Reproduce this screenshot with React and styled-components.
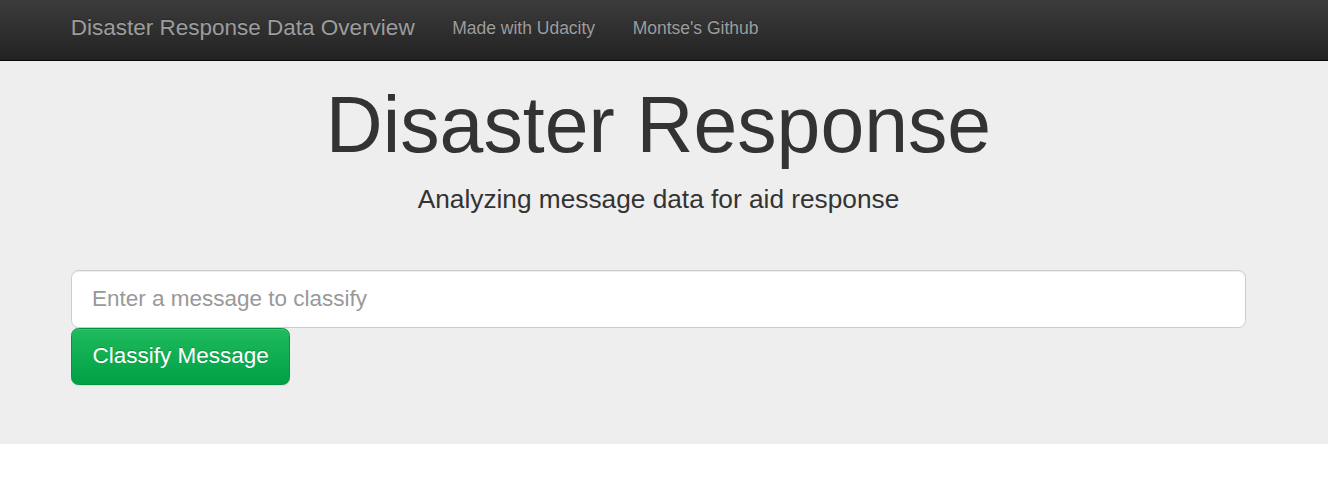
import React from 'react';
import styled, { createGlobalStyle } from 'styled-components';

const GlobalStyle = createGlobalStyle`
  * {
    box-sizing: border-box;
  }
  body {
    margin: 0;
    background: #fff;
    font-family: "Liberation Sans", Arial, Helvetica, sans-serif;
    color: #333;
  }
`;

// barre de navigation sombre
const Navbar = styled.nav`
  height: 61px;
  background-image: linear-gradient(to bottom, #3c3c3c 0, #222 100%);
  border-bottom: 1px solid #080808;
`;

const NavInner = styled.div`
  display: flex;
  align-items: flex-start;
  margin-left: 52px;
`;

const Brand = styled.a`
  display: block;
  padding: 14.5px 18.75px 0;
  font-size: 22.5px;
  line-height: 25px;
  color: #9d9d9d;
  text-decoration: none;
  text-shadow: 0 -1px 0 rgba(0, 0, 0, 0.25);
`;

const NavLinks = styled.ul`
  display: flex;
  list-style: none;
  margin: 0;
  padding: 0;
`;

const NavLink = styled.a`
  display: block;
  padding: 15.5px 18.75px 0;
  font-size: 17.5px;
  line-height: 25px;
  color: #9d9d9d;
  text-decoration: none;
  text-shadow: 0 -1px 0 rgba(0, 0, 0, 0.25);
`;

const Jumbotron = styled.header`
  background: #eee;
  padding: 20.5px 0 59px;
`;

const Container = styled.div`
  width: 1175px;
  margin-left: 71px;
`;

const Title = styled.h1`
  margin: 0;
  font-size: 78.75px;
  line-height: 1.1;
  font-weight: 400;
  text-align: center;
  color: #333;
`;

const Subtitle = styled.p`
  margin: 12.5px 0 0;
  font-size: 26.25px;
  line-height: 36.75px;
  text-align: center;
  color: #333;
`;

const Form = styled.form`
  display: flex;
  flex-direction: column;
  align-items: flex-start;
  margin-top: 52.75px;
`;

const Input = styled.input`
  display: block;
  width: 100%;
  height: 57.5px;
  padding: 12.5px 20px;
  font-family: inherit;
  font-size: 22.5px;
  line-height: 30px;
  color: #555;
  background: #fff;
  border: 1.25px solid #ccc;
  border-radius: 7.5px;
  box-shadow: inset 0 1px 1px rgba(0, 0, 0, 0.075);
  outline: none;
  &::placeholder {
    color: #999;
  }
`;

const Button = styled.button`
  height: 57.5px;
  padding: 12.5px 20.5px;
  font-family: inherit;
  font-size: 22.5px;
  line-height: 30px;
  color: #fff;
  background-image: linear-gradient(to bottom, #1fbb5d 0, #00a046 100%);
  border: 1.25px solid #00953f;
  border-radius: 7.5px;
  text-shadow: 0 -1px 0 rgba(0, 0, 0, 0.2);
  box-shadow: inset 0 1px 0 rgba(255, 255, 255, 0.15), 0 1px 1px rgba(0, 0, 0, 0.075);
  cursor: pointer;
`;

function App() {
  return (
    <>
      <GlobalStyle />
      <Navbar>
        <NavInner>
          <Brand href="#">Disaster Response Data Overview</Brand>
          <NavLinks>
            <li>
              <NavLink href="#">Made with Udacity</NavLink>
            </li>
            <li>
              <NavLink href="#">Montse's Github</NavLink>
            </li>
          </NavLinks>
        </NavInner>
      </Navbar>
      <Jumbotron>
        <Container>
          <Title>Disaster Response</Title>
          <Subtitle>Analyzing message data for aid response</Subtitle>
          <Form onSubmit={(e) => e.preventDefault()}>
            <Input type="text" placeholder="Enter a message to classify" />
            <Button type="submit">Classify Message</Button>
          </Form>
        </Container>
      </Jumbotron>
    </>
  );
}

export default App;
